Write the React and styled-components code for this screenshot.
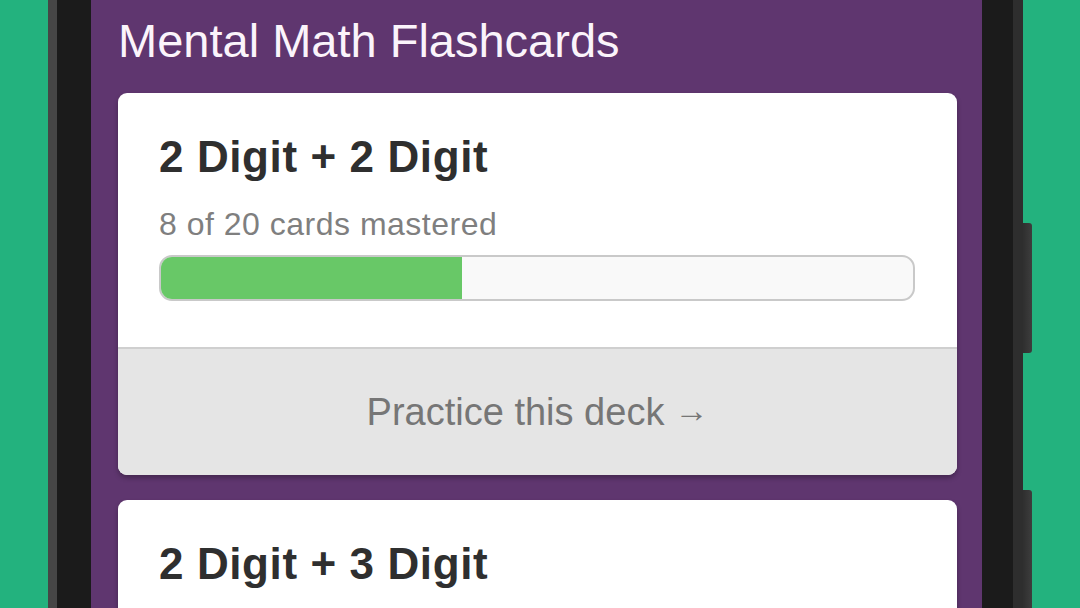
import React from 'react';
import styled, { createGlobalStyle } from 'styled-components';

const GlobalStyle = createGlobalStyle`
    html, body {
        margin: 0;
        padding: 0;
        height: 100%;
        overflow: hidden;
        background: #23b27e;
        font-family: "Liberation Sans", Arial, sans-serif;
    }
    #root {
        height: 100%;
    }
`;

const Stage = styled.div`
    height: 100%;
    padding-left: 48px;
    overflow: hidden;
`;

const Phone = styled.div`
    position: relative;
    box-sizing: border-box;
    width: 975px;
    height: 100%;
    background: #1b1b1b;
    border-left: 9px solid #464646;
    border-right: 10px solid #2e2e2e;
    padding: 0 31px 0 34px;
`;

const SideButton = styled.div`
    position: absolute;
    right: -19px;
    top: ${props => props.top}px;
    width: 9px;
    height: ${props => props.length}px;
    background: linear-gradient(to right, #2f2f2f, #3d3d3d);
    border-radius: 0 3px 3px 0;
`;

const Screen = styled.div`
    height: 100%;
    background: #5f366f;
    padding: 17px 25px 0 27px;
    box-sizing: border-box;
    overflow: hidden;
`;

const AppTitle = styled.h1`
    margin: 0 0 29px;
    font-size: 47px;
    line-height: 1;
    font-weight: normal;
    color: #fbf4fb;
`;

const DeckList = styled.div`
    display: flex;
    flex-direction: column;
    gap: 25px;
`;

const Card = styled.div`
    background: #fff;
    border-radius: 9px;
    overflow: hidden;
    box-shadow: 0 3px 5px rgba(0, 0, 0, 0.28);
`;

const CardBody = styled.div`
    padding: 42px 42px 46px 41px;
`;

const DeckTitle = styled.h2`
    margin: 0;
    font-size: 44px;
    line-height: 1;
    font-weight: bold;
    letter-spacing: 0.6px;
    color: #2f2f2f;
`;

const Progress = styled.div`
    margin-top: 29px;
    font-size: 32px;
    line-height: 1;
    letter-spacing: 0.5px;
    color: #7f7f7f;
`;

const Bar = styled.div`
    margin-top: 15px;
    height: 46px;
    box-sizing: border-box;
    border: 2px solid #c9c9c9;
    border-radius: 13px;
    background: #f9f9f9;
    overflow: hidden;
`;

const BarFill = styled.div`
    height: 100%;
    background: #68c867;
`;

const PracticeFooter = styled.a`
    display: flex;
    align-items: center;
    justify-content: center;
    height: 126px;
    background: #e5e5e5;
    border-top: 2px solid #cfcfcf;
    font-size: 38px;
    color: #767676;
    text-decoration: none;
    cursor: pointer;
`;

const Arrow = styled.span`
    margin-left: 10px;
    font-size: 34px;
    position: relative;
    top: -2px;
`;

const decks = [
    { title: '2 Digit + 2 Digit', mastered: 8, total: 20 },
    { title: '2 Digit + 3 Digit', mastered: 3, total: 20 }
];

const Deck = ({ title, mastered, total }) => (
    <Card>
        <CardBody>
            <DeckTitle>{title}</DeckTitle>
            <Progress>{mastered} of {total} cards mastered</Progress>
            <Bar>
                <BarFill style={{ width: `${(mastered / total) * 100}%` }} />
            </Bar>
        </CardBody>
        <PracticeFooter>
            Practice this deck<Arrow>→</Arrow>
        </PracticeFooter>
    </Card>
);

export default function App() {
    return (
        <>
            <GlobalStyle />
            <Stage>
                <Phone>
                    <SideButton top={223} length={130} />
                    <SideButton top={490} length={200} />
                    <Screen>
                        <AppTitle>Mental Math Flashcards</AppTitle>
                        <DeckList>
                            {decks.map((deck, i) => (
                                <Deck key={i} {...deck} />
                            ))}
                        </DeckList>
                    </Screen>
                </Phone>
            </Stage>
        </>
    );
}
